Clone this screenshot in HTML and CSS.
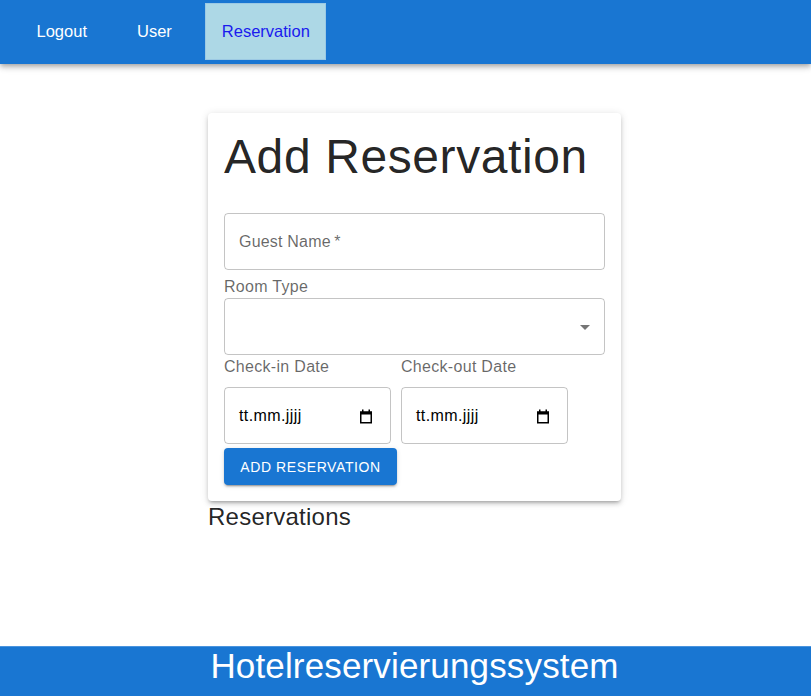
FILE: index.html
```html
<!DOCTYPE html>
<html lang="de">
<head>
<meta charset="utf-8">
<title>Hotelreservierungssystem</title>
<link rel="stylesheet" href="styles.css">
</head>
<body>
<div class="page">
  <header class="appbar">
    <nav class="toolbar">
      <a class="nav-link" href="#">Logout</a>
      <a class="nav-link" href="#">User</a>
      <a class="nav-link active" href="#">Reservation</a>
    </nav>
  </header>

  <main class="main">
    <section class="card">
      <h3 class="title">Add Reservation</h3>
      <div class="field guest">
        <span class="placeholder">Guest Name&thinsp;*</span>
      </div>
      <div class="label">Room Type</div>
      <div class="field select">
        <svg class="arrow" width="24" height="24" viewBox="0 0 24 24"><path d="M7 10l5 5 5-5z"/></svg>
      </div>
      <div class="dates">
        <div class="date-col">
          <div class="label">Check-in Date</div>
          <div class="field date">
            <span class="date-text">tt.mm.jjjj</span>
            <svg class="cal" width="14" height="15" viewBox="0 0 14 15"><rect x="1.75" y="3.25" width="10.5" height="10.5" fill="none" stroke="#000" stroke-width="1.5"/><rect x="1" y="2.5" width="12" height="3"/><rect x="3" y="0.5" width="1.5" height="2.5"/><rect x="9.5" y="0.5" width="1.5" height="2.5"/></svg>
          </div>
        </div>
        <div class="date-col">
          <div class="label">Check-out Date</div>
          <div class="field date">
            <span class="date-text">tt.mm.jjjj</span>
            <svg class="cal" width="14" height="15" viewBox="0 0 14 15"><rect x="1.75" y="3.25" width="10.5" height="10.5" fill="none" stroke="#000" stroke-width="1.5"/><rect x="1" y="2.5" width="12" height="3"/><rect x="3" y="0.5" width="1.5" height="2.5"/><rect x="9.5" y="0.5" width="1.5" height="2.5"/></svg>
          </div>
        </div>
      </div>
      <button class="btn" type="button">Add Reservation</button>
    </section>
    <h5 class="subtitle">Reservations</h5>
  </main>

  <footer class="footer">Hotelreservierungssystem</footer>
</div>
</body>
</html>
```

FILE: styles.css
```css
html, body {
  margin: 0;
  padding: 0;
}
body {
  font-family: "Liberation Sans", Arial, sans-serif;
  color: rgba(0, 0, 0, 0.87);
  background: #fff;
}
.page {
  min-height: 100vh;
  display: flex;
  flex-direction: column;
}
.appbar {
  height: 64px;
  background: #1976d2;
  box-shadow: 0px 2px 4px -1px rgba(0,0,0,0.2), 0px 4px 5px 0px rgba(0,0,0,0.14), 0px 1px 10px 0px rgba(0,0,0,0.12);
  position: relative;
  z-index: 2;
}
.toolbar {
  display: flex;
  align-items: flex-start;
  gap: 17px;
  padding: 3px 0 0 20px;
}
.nav-link {
  height: 57px;
  display: flex;
  align-items: center;
  padding: 0 16.5px;
  box-sizing: border-box;
  color: #fff;
  text-decoration: none;
  font-size: 16.5px;
}
.nav-link.active {
  background: #add8e6;
  color: #1a1aee;
  box-shadow: inset 0 0 0 1px #9cc9e4;
}
.main {
  margin-left: 208px;
  padding-top: 49px;
  width: 413px;
}
.card {
  background: #fff;
  border-radius: 4px;
  padding: 16px;
  box-shadow: 0px 3px 3px -2px rgba(0,0,0,0.2), 0px 3px 4px 0px rgba(0,0,0,0.14), 0px 1px 8px 0px rgba(0,0,0,0.12);
}
.title {
  margin: 0 0 28px;
  font-size: 48px;
  line-height: 56px;
  font-weight: 400;
  letter-spacing: 0.6px;
  color: rgba(0, 0, 0, 0.87);
}
.field {
  height: 57px;
  box-sizing: border-box;
  border: 1px solid rgba(0, 0, 0, 0.23);
  border-radius: 4px;
  display: flex;
  align-items: center;
  position: relative;
}
.guest {
  padding-left: 14px;
  margin-bottom: 5px;
}
.placeholder {
  font-size: 16px;
  color: rgba(0, 0, 0, 0.6);
  letter-spacing: 0.2px;
  margin-top: 1px;
}
.label {
  font-size: 16px;
  line-height: 23px;
  letter-spacing: 0.3px;
  color: rgba(0, 0, 0, 0.6);
}
.select {
  justify-content: flex-end;
  padding-right: 7px;
}
.arrow {
  fill: rgba(0, 0, 0, 0.54);
}
.dates {
  display: flex;
  gap: 10px;
}
.date-col {
  width: 167px;
  display: flex;
  flex-direction: column;
}
.date-col .label {
  margin-bottom: 9px;
}
.date {
  justify-content: space-between;
  padding: 0 17px 0 14px;
}
.date-text {
  font-size: 16px;
  color: #000;
  letter-spacing: 0.4px;
}
.cal {
  fill: #000;
  margin-top: 1px;
}
.btn {
  margin-top: 4px;
  height: 37px;
  width: 173px;
  border: 0;
  border-radius: 4px;
  background: #1976d2;
  color: #fff;
  font-family: "Liberation Sans", Arial, sans-serif;
  font-size: 14px;
  letter-spacing: 0.6px;
  text-transform: uppercase;
  box-shadow: 0px 3px 1px -2px rgba(0,0,0,0.2), 0px 2px 2px 0px rgba(0,0,0,0.14), 0px 1px 5px 0px rgba(0,0,0,0.12);
  display: block;
  padding: 0;
}
.subtitle {
  margin: 0;
  font-size: 24px;
  line-height: 32px;
  font-weight: 400;
  letter-spacing: 0.25px;
  color: rgba(0, 0, 0, 0.87);
}
.footer {
  margin-top: auto;
  height: 50px;
  box-sizing: border-box;
  background: #1976d2;
  border-top: 1px solid #4a94de;
  color: #fff;
  font-size: 35px;
  line-height: 38px;
  letter-spacing: 0.15px;
  text-align: center;
  padding-left: 18px;
}
```
